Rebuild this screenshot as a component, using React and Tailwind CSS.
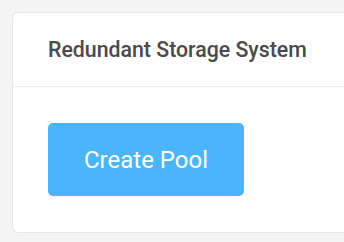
export default function App() {
  return (
    <div className="min-h-[242px] bg-[#f4f4f4] pl-3 pt-3 pb-[10px] font-['Roboto',sans-serif]">
      <div className="w-[340px] overflow-hidden rounded-l-[6px] border border-r-0 border-[#e6e6e6] bg-white">
        <div className="flex h-[74px] items-center border-b border-[#ececec] pl-[35px]">
          <h2 className="text-[21.3px] font-medium text-[#4a4a4a]">Redundant Storage System</h2>
        </div>
        <div className="px-[35px] py-9">
          <button
            type="button"
            className="flex h-[73px] w-[196px] items-center justify-center rounded-[5px] bg-[#4bb5fc] text-[24px] text-white"
          >
            Create Pool
          </button>
        </div>
      </div>
    </div>
  );
}
